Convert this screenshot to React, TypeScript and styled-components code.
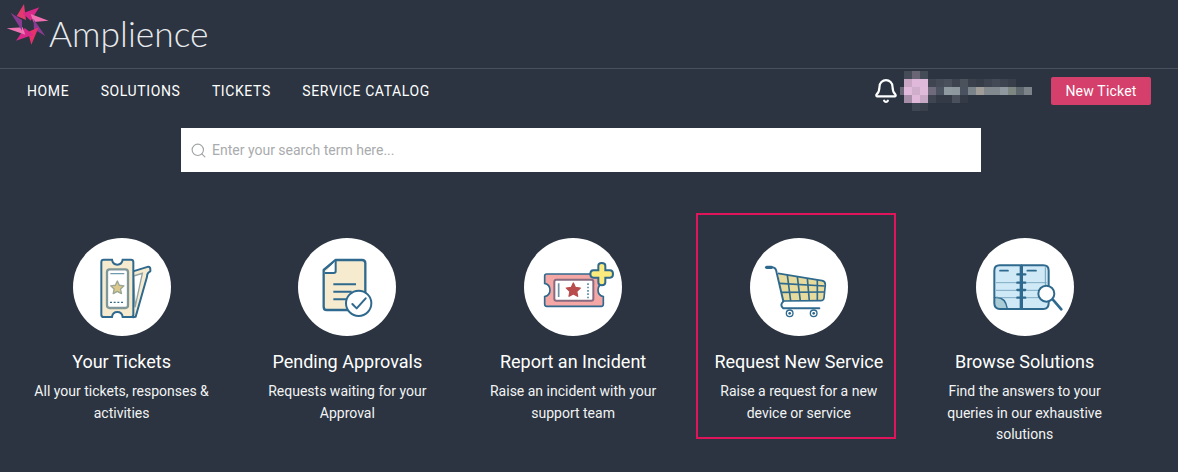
import React from 'react';
import styled, { createGlobalStyle } from 'styled-components';
import { Bell, Search } from 'lucide-react';

const colors = {
  bg: '#2b3440',
  line: '#4a515c',
  rose: '#d43f6b',
  blue: '#2f6a8e',
  cream: '#f6ebcf',
};

const GlobalStyle = createGlobalStyle`
  html, body {
    margin: 0;
    padding: 0;
    background: ${colors.bg};
  }
`;

const Page = styled.div`
  width: 1178px;
  height: 472px;
  overflow: hidden;
  background: ${colors.bg};
  color: #fff;
  font-family: Roboto, 'Liberation Sans', sans-serif;
`;

const TopBar = styled.header`
  height: 68px;
  display: flex;
  align-items: flex-start;
  border-bottom: 1px solid ${colors.line};
`;

const LogoMark = styled.svg`
  width: 50px;
  height: 47px;
  flex: none;
`;

const LogoText = styled.span`
  font-family: Lato, sans-serif;
  font-weight: 300;
  font-size: 35.4px;
  line-height: 42px;
  margin: 13px 0 0 -1px;
  color: #e8eaed;
`;

const NavBar = styled.nav`
  height: 44px;
  padding: 0 27px;
  display: flex;
  align-items: center;
  gap: 31.5px;
`;

const NavLink = styled.a`
  font-size: 14px;
  font-weight: 400;
  letter-spacing: 0.6px;
  color: #fff;
`;

const UserArea = styled.div`
  margin-left: auto;
  display: flex;
  align-items: center;
`;

const BellWrap = styled.span`
  display: flex;
  margin-right: 1px;
  color: #fff;
`;

const BlurName = styled.svg`
  width: 132px;
  height: 40px;
  display: block;
`;

const NewTicket = styled.button`
  width: 100px;
  height: 28px;
  margin-left: 19px;
  border: 0;
  border-radius: 2px;
  background: ${colors.rose};
  color: #fff;
  font-family: inherit;
  font-size: 14px;
  font-weight: 400;
  letter-spacing: 0.2px;
`;

const SearchBox = styled.label`
  width: 800px;
  height: 44px;
  margin: 15px 0 0 181px;
  display: flex;
  align-items: center;
  gap: 5px;
  padding-left: 9px;
  box-sizing: border-box;
  background: #fff;
  color: #a0a4a6;
`;

const SearchInput = styled.input`
  flex: 1;
  border: 0;
  outline: 0;
  padding: 0;
  font-family: inherit;
  font-size: 14px;
  &::placeholder {
    color: #a9abad;
    opacity: 1;
  }
`;

const CardRow = styled.section`
  margin: 66px 0 0 8.725px;
  display: grid;
  grid-template-columns: repeat(5, 225.75px);
`;

const Card = styled.article`
  position: relative;
  display: flex;
  flex-direction: column;
  align-items: center;
  text-align: center;
`;

const Highlight = styled.div`
  position: absolute;
  left: 10px;
  top: -25px;
  width: 200px;
  height: 226px;
  box-sizing: border-box;
  border: 2px solid #e0145a;
  pointer-events: none;
`;

const Circle = styled.div`
  width: 98px;
  height: 98px;
  border-radius: 50%;
  background: #fff;
  overflow: hidden;
`;

const IconSvg = styled.svg`
  width: 98px;
  height: 98px;
  display: block;
`;

const CardTitle = styled.h3`
  margin: 13px 0 0;
  font-size: 18px;
  font-weight: 400;
  line-height: 26px;
  white-space: nowrap;
`;

const CardText = styled.p`
  width: 190px;
  margin: 6px 0 0;
  font-size: 14px;
  line-height: 21.5px;
  color: #f2f3f4;
`;

const Star = ({ cx, cy, r, fill, stroke }: { cx: number; cy: number; r: number; fill: string; stroke: string }) => {
  const pts = Array.from({ length: 10 }, (_, i) => {
    const a = (Math.PI / 5) * i - Math.PI / 2;
    const d = i % 2 ? r * 0.48 : r;
    return `${cx + d * Math.cos(a)},${cy + d * Math.sin(a)}`;
  }).join(' ');
  return <polygon points={pts} fill={fill} stroke={stroke} strokeWidth={4} strokeLinejoin="round" />;
};

const TicketsIcon = () => (
  <IconSvg viewBox="24 24 294 294">
    <g stroke={colors.blue} strokeWidth={6} strokeLinejoin="round" strokeLinecap="round">
      <path d="M204 124 L250 110 Q256 110 256 118 L256 124 Q246 128 246 140 L212 260 L204 262 Z" fill={colors.cream} />
    </g>
    <path d="M206 138 L232 130 L210 232 Z" fill="#fff" stroke="#8fa3a6" strokeWidth={4} />
    <path
      d="M116 89 H141 Q143 104 157 104 Q171 104 173 89 H198 Q205 89 205 96 V254 Q205 261 198 261 H173 Q171 246 157 246 Q143 246 141 261 H116 Q109 261 109 254 V96 Q109 89 116 89 Z"
      fill={colors.cream}
      stroke={colors.blue}
      strokeWidth={6}
    />
    <rect x={126} y={118} width={63} height={116} rx={8} fill="#fff" stroke="#80979a" strokeWidth={7} />
    <path d="M136 131 H178" stroke="#6f9ab0" strokeWidth={4} />
    <Star cx={157} cy={174} r={21} fill="#dcc98c" stroke="#9aa693" />
    <path d="M135 217 H178" stroke={colors.blue} strokeWidth={4} strokeDasharray="6 5" />
  </IconSvg>
);

const ApprovalIcon = () => (
  <IconSvg viewBox="24 24 294 294">
    <path
      d="M137 90 H216 Q226 90 226 100 V230 Q226 240 216 240 H110 Q101 240 101 230 V120 Z"
      fill={colors.cream}
      stroke={colors.blue}
      strokeWidth={7}
      strokeLinejoin="round"
    />
    <path d="M137 92 V124 Q137 129 131 129 H104" fill="#fff" stroke={colors.blue} strokeWidth={6} />
    <path d="M130 163 H198 M130 185 H185 M130 208 H170" stroke={colors.blue} strokeWidth={6} />
    <circle cx={206} cy={220} r={38} fill="#fff" stroke={colors.blue} strokeWidth={6} />
    <path d="M187 222 L200 235 L227 205" fill="none" stroke={colors.blue} strokeWidth={6} strokeLinecap="round" strokeLinejoin="round" />
  </IconSvg>
);

const IncidentIcon = () => (
  <IconSvg viewBox="24 24 294 294">
    <path
      d="M92 132 H256 Q262 132 262 138 V160 Q246 164 246 180 Q246 196 262 200 V222 Q262 229 256 229 H92 Q86 229 86 222 V200 Q102 196 102 180 Q102 164 86 160 V138 Q86 132 92 132 Z"
      fill="#f4a7a5"
      stroke={colors.blue}
      strokeWidth={5}
    />
    <rect x={115} y={149} width={117} height={63} rx={6} fill="#fff" stroke="#876b80" strokeWidth={6} />
    <path d="M128 160 V201" stroke="#6f8fa5" strokeWidth={5} />
    <Star cx={172} cy={181} r={22} fill="#b94c4c" stroke="#b94c4c" />
    <path d="M216 160 V206" stroke={colors.blue} strokeWidth={4} strokeDasharray="5 5" />
    <path
      d="M247 107 Q247 99 257 99 Q268 99 268 107 V121 H282 Q291 121 291 132 Q291 143 282 143 H268 V157 Q268 166 257 166 Q247 166 247 157 V143 H232 Q223 143 223 132 Q223 121 232 121 H247 Z"
      fill="#fbea7d"
      stroke={colors.blue}
      strokeWidth={6}
    />
  </IconSvg>
);

const CartIcon = () => (
  <IconSvg viewBox="24 24 294 294">
    <path d="M108 130 L240 152 Q250 154 250 164 L246 204 Q245 212 236 212 L124 213 Z" fill="#e6da9c" />
    <g fill="none" stroke={colors.blue} strokeWidth={5} strokeLinejoin="round">
      <path d="M108 130 L240 152 Q250 154 250 164 L246 204 Q245 212 236 212 L124 213" />
      <path d="M112 160 L248 168 M118 187 L247 186" />
      <path d="M136 135 L146 213 M166 140 L175 213 M196 145 L202 213 M226 150 L226 212" />
    </g>
    <path d="M74 112 H90 Q102 112 104 128 L124 214" fill="none" stroke={colors.blue} strokeWidth={6} strokeLinecap="round" />
    <path d="M74 112 H88" stroke={colors.blue} strokeWidth={10} strokeLinecap="round" />
    <path d="M124 214 Q112 226 124 235 H232" fill="none" stroke={colors.blue} strokeWidth={6} strokeLinecap="round" />
    <circle cx={143} cy={250} r={10} fill="#fff" stroke={colors.blue} strokeWidth={4} />
    <circle cx={143} cy={250} r={4} fill={colors.blue} />
    <circle cx={215} cy={250} r={10} fill="#fff" stroke={colors.blue} strokeWidth={4} />
    <circle cx={215} cy={250} r={4} fill={colors.blue} />
  </IconSvg>
);

const BookIcon = () => (
  <IconSvg viewBox="24 24 294 294">
    <path d="M95 106 H158 V237 H96 Q79 237 79 220 V122 Q79 106 95 106 Z" fill="#cfe9f6" stroke={colors.blue} strokeWidth={6} />
    <path d="M162 106 H226 Q242 106 242 122 V220 Q242 237 226 237 H162 Z" fill="#cfe9f6" stroke={colors.blue} strokeWidth={6} />
    <path d="M80 203 Q112 198 118 236 H96 Q80 236 80 220 Z" fill="#a9ccd6" stroke={colors.blue} strokeWidth={4} />
    <path d="M96 122 H120 M178 122 H204" stroke={colors.blue} strokeWidth={5} strokeLinecap="round" />
    <path d="M84 158 H146 M84 181 H146 M84 203 H146 M176 158 H236 M176 181 H212 M176 203 H212" stroke="#6f9fb8" strokeWidth={2.5} />
    <path d="M232 112 V170" stroke="#6f9fb8" strokeWidth={3} />
    <path d="M148 133 H172 M148 158 H172 M148 180 H172 M148 203 H172" stroke={colors.blue} strokeWidth={7} strokeLinecap="round" />
    <path d="M254 208 L280 238" stroke={colors.blue} strokeWidth={8} strokeLinecap="round" />
    <circle cx={235} cy={191} r={24} fill="#fff" stroke={colors.blue} strokeWidth={6} />
  </IconSvg>
);

// colour rows of the pixelated user name, each cell 8px
const blurRows: [number, string[]][] = [
  [1, ['#454b57', '#6a6574', '#444c58']],
  [1, ['#c9a7c4', '#e0b8da', '#dfb9d9', '#3f4652', '#454c58', '#4a515c', '#3d4450', '#4b525c', '#3a414d', '#363d49', '#3d4450', '#434a55', '#3d4450', '#383f4b']],
  [0, ['#6b6675', '#e2bbdc', '#cfaecc', '#dfbbd9', '#6f6a7c', '#4c5360', '#8f9aa0', '#8d979e', '#4a5260', '#7a828a', '#a09c98', '#828a90', '#828a90', '#8f989e', '#7e8682', '#5e666e', '#7c848a']],
  [1, ['#a68ea8', '#e0b8da', '#c7a8c4', '#3f4652', '#343b47', '#343b47', '#4a505c', '#343b47']],
  [2, ['#3f4653', '#3a414d']],
];

const UserBlur = () => (
  <BlurName viewBox="4 0 132 40">
    {blurRows.map(([start, cells], row) =>
      cells.map((fill, col) => (
        <rect key={`${row}-${col}`} x={(start + col) * 8} y={row * 8} width={8} height={8} fill={fill} />
      ))
    )}
  </BlurName>
);

const logoBlades: [string, string][] = [
  ['72,12 78,60 50,48', '#e03a6e'],
  ['118,22 68,40 92,62', '#d8288a'],
  ['146,62 92,42 100,66', '#ef6fb0'],
  ['136,108 100,56 102,88', '#8a3a92'],
  ['94,134 116,82 84,96', '#e8306c'],
  ['48,122 100,104 74,84', '#d8288a'],
  ['20,85 76,104 68,82', '#ef74b4'],
  ['32,38 66,92 66,60', '#8a3a92'],
];

const cards = [
  { title: 'Your Tickets', text: 'All your tickets, responses & activities', icon: <TicketsIcon /> },
  { title: 'Pending Approvals', text: 'Requests waiting for your Approval', icon: <ApprovalIcon /> },
  { title: 'Report an Incident', text: 'Raise an incident with your support team', icon: <IncidentIcon /> },
  { title: 'Request New Service', text: 'Raise a request for a new device or service', icon: <CartIcon />, marked: true },
  { title: 'Browse Solutions', text: 'Find the answers to your queries in our exhaustive solutions', icon: <BookIcon /> },
];

const App: React.FC = () => {
  return (
    <Page>
      <GlobalStyle />
      <TopBar>
        <LogoMark viewBox="0 0 150 141">
          {logoBlades.map(([points, fill]) => (
            <polygon key={points} points={points} fill={fill} />
          ))}
        </LogoMark>
        <LogoText>Amplience</LogoText>
      </TopBar>

      <NavBar>
        <NavLink>HOME</NavLink>
        <NavLink>SOLUTIONS</NavLink>
        <NavLink>TICKETS</NavLink>
        <NavLink>SERVICE CATALOG</NavLink>
        <UserArea>
          <BellWrap>
            <Bell size={26} strokeWidth={2} />
          </BellWrap>
          <UserBlur />
          <NewTicket>New Ticket</NewTicket>
        </UserArea>
      </NavBar>

      <SearchBox>
        <Search size={17} strokeWidth={1.6} />
        <SearchInput placeholder="Enter your search term here..." />
      </SearchBox>

      <CardRow>
        {cards.map((card) => (
          <Card key={card.title}>
            {card.marked && <Highlight />}
            <Circle>{card.icon}</Circle>
            <CardTitle>{card.title}</CardTitle>
            <CardText>{card.text}</CardText>
          </Card>
        ))}
      </CardRow>
    </Page>
  );
};

export default App;
